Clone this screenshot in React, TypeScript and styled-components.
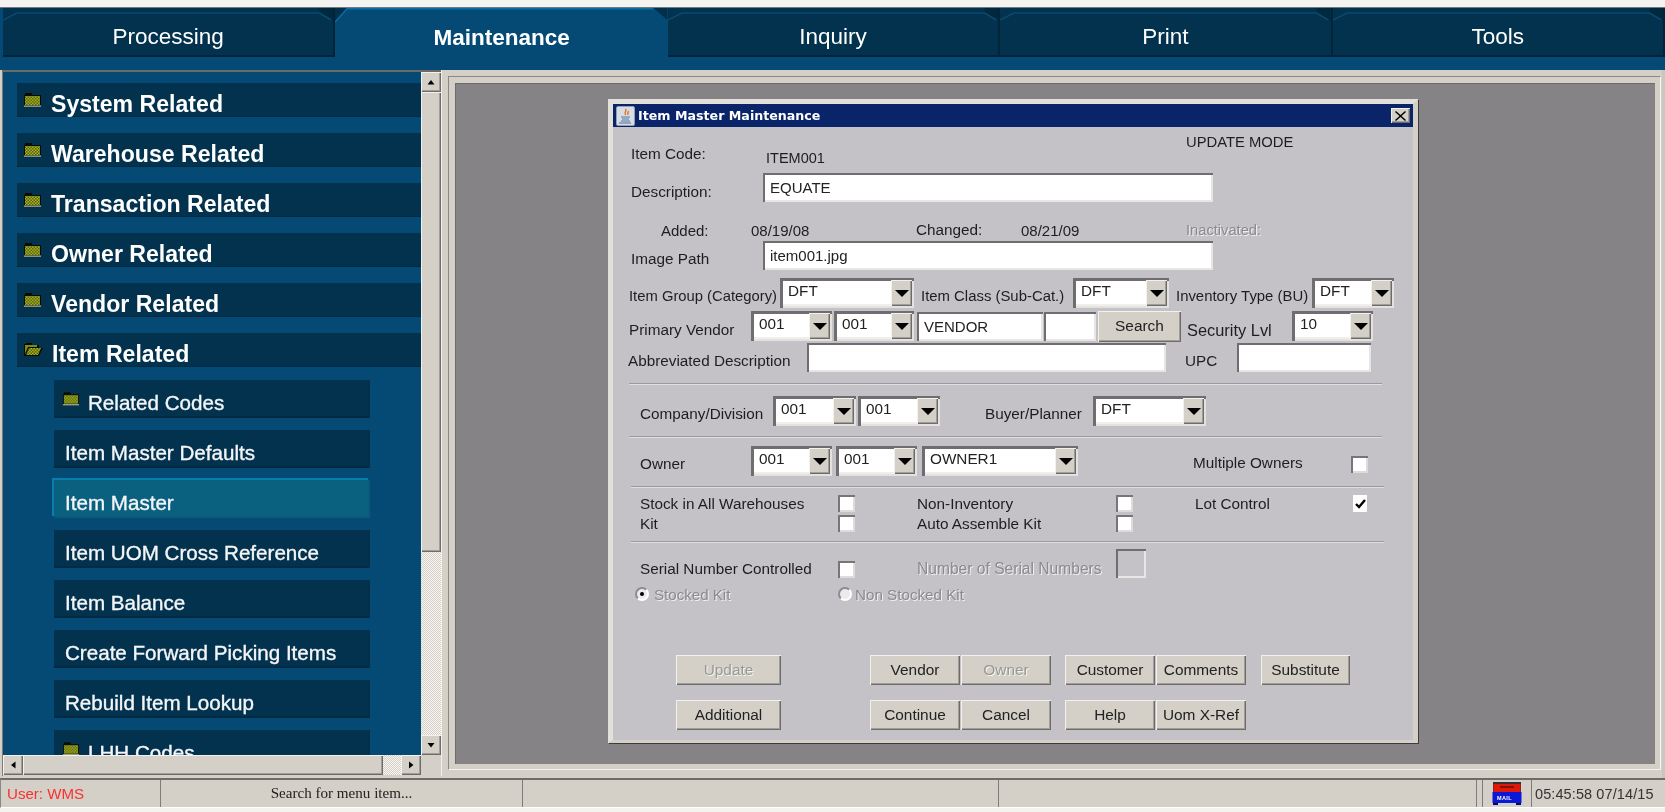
import React from "react";
import styled, { createGlobalStyle, css } from "styled-components";

const Global = createGlobalStyle`
  html, body { margin: 0; padding: 0; width: 1665px; height: 812px; overflow: hidden; background: #fff; }
  #root { width: 1665px; height: 812px; }
  * { box-sizing: border-box; }
`;

const sans = `"Liberation Sans", Arial, sans-serif`;
const dither = css`
  background-color: #e6e4e0;
  background-image: repeating-conic-gradient(#d4d0c8 0 25%, #f6f5f2 0 50%);
  background-size: 2px 2px;
`;
const raised = css`
  background: #d4d0c8;
  box-shadow: inset 1px 1px 0 #f2f1ed, inset -1px -1px 0 #6e6c68, inset -2px -2px 0 #a09e9a;
`;
const sunken = css`
  box-shadow: inset 2px 2px 0 #6f6d70, inset -2px -2px 0 #e8e6e4;
`;

const Page = styled.div`
  width: 1665px; height: 812px; padding-top: 7px;
  display: flex; flex-direction: column;
  font-family: ${sans};
  background: #f4f3ef;
  filter: blur(0.35px);
`;
const TopWhite = styled.div`
  position: absolute; left: 0; top: 0; width: 1665px; height: 7px; background: #fff;
`;
const TabStrip = styled.nav`
  height: 63px; background: #044a75; padding: 0 0 13px 3px; display: flex; border-top: 1px solid #6d7a82;
`;
const Tab = styled.div<{ $active?: boolean }>`
  position: relative; width: 332.4px; height: 49px; display: flex; align-items: center; justify-content: center;
  color: #fff; font-size: 22.5px;
  padding-top: 11px;
  ${(p) => p.$active ? css`
    background: #044a75; font-weight: bold;
  ` : css`
    background: #03324e;
    border-right: 2px solid #02243a; border-bottom: 2px solid #02243a;
  `}
`;
const TabBevel = styled.svg`
  position: absolute; left: 0; top: 0; width: 100%; height: 16px; pointer-events: none;
`;

const Body = styled.div`
  height: 708px; display: flex; background: #d4d0c8; padding-left: 2px; border-right: 3px solid #c8c6c0;
`;
const MenuPane = styled.aside`
  width: 439px; height: 706px; display: grid;
  grid-template-columns: 418px 20px; grid-template-rows: 683px 20px;
  border-top: 2px solid #6b6b68; border-left: 1px solid #7a7a76;
`;
const MenuScroll = styled.div`
  background: #044a75; overflow: hidden; padding: 11px 0 0 14px;
  display: flex; flex-direction: column; gap: 16px;
`;
const GroupRow = styled.div`
  flex: none; height: 34px; width: 404px; background: #03324e; border-bottom: 1px solid #022a42;
  display: flex; align-items: center; padding: 9px 0 0 6px; gap: 9px;
  color: #fff; font-weight: bold; font-size: 23.1px;
`;
const SubRow = styled.div<{ $active?: boolean; $text?: boolean }>`
  flex: none; height: 38px; width: 316px; margin-left: 37px;
  background: ${(p) => (p.$active ? "#09607f" : "#03324e")};
  border-right: 2px solid ${(p) => (p.$active ? "#0a5a7c" : "#02304a")};
  border-bottom: 2px solid ${(p) => (p.$active ? "#0a5a7c" : "#022a42")};
  ${(p) => p.$active && css`box-shadow: -2px -2px 0 #0a7eaa;`}
  display: flex; align-items: center; padding: 10px 0 0 ${(p) => (p.$text ? "11px" : "8px")}; gap: 8px;
  color: #f4f6f8; font-size: 20.6px; -webkit-text-stroke: 0.35px #f4f6f8;
`;
const VBar = styled.div`
  display: flex; flex-direction: column; background: #d4d0c8;
`;
const HBar = styled.div`
  display: flex; background: #d4d0c8;
`;
const ScrollBtn = styled.div`
  ${raised};
  flex: none; width: 20px; height: 20px; display: flex; align-items: center; justify-content: center;
`;
const VThumb = styled.div`
  ${raised}; flex: none; height: 460px;
`;
const HThumb = styled.div`
  ${raised}; flex: none; width: 360px;
`;
const Track = styled.div`
  ${dither}; flex: 1;
`;
const Corner = styled.div`background: #d4d0c8;`;

const Desktop = styled.main`
  width: 1221px; height: 706px;
  padding: 6px 1px 6px 6px; background: #d4d0c8;
  border-left: 1px solid #f1f0ec;
`;
const DesktopInner = styled.div`
  height: 100%; padding: 6px 5px 5px 6px; border: 1px solid #8a8884;
  border-right-color: #f4f3ef; border-bottom-color: #f4f3ef;
  background: #d4d0c8;
`;
const Canvas = styled.div`
  height: 100%; background: #858386; padding: 15px 0 0 152px;
  border-top: 1px solid #6d6b6e; border-left: 1px solid #6d6b6e;
`;
const Dialog = styled.section`
  width: 810px; height: 644px; background: #c4c2c6;
  border: 5px solid #d4d0c8;
  border-bottom-width: 3px;
  border-top-color: #e2e0da; border-left-color: #e2e0da;
  box-shadow: 1px 1px 0 #3c3c3c;
  display: flex; flex-direction: column;
`;
const TitleBar = styled.header`
  flex: none; height: 23px; background: #0a246a; display: flex; align-items: center;
  padding: 0 3px; color: #fff;
`;
const TitleText = styled.span`
  font-family: "DejaVu Sans", Verdana, sans-serif; font-weight: bold; font-size: 12.65px; margin-left: 3px;
`;
const CloseBtn = styled.div`
  ${raised}; margin-left: auto; width: 19px; height: 15px; display: flex; align-items: center; justify-content: center;
`;
const Form = styled.div`
  flex: 1; padding-top: 1px; color: #1e1e1e; font-size: 15.3px;
`;
const Row = styled.div<{ $h: number; $top?: number; $left?: number }>`
  display: flex; align-items: center; height: ${(p) => p.$h}px;
  margin-top: ${(p) => p.$top ?? 0}px; padding-left: ${(p) => p.$left ?? 0}px;
  white-space: nowrap;
`;
const Label = styled.span<{ $w?: number; $dy?: number; $off?: boolean; $size?: number; $ml?: number }>`
  flex: none; ${(p) => p.$w != null && `width: ${p.$w}px;`}
  ${(p) => p.$ml != null && `margin-left: ${p.$ml}px;`}
  ${(p) => p.$dy != null && `transform: translateY(${p.$dy}px);`}
  ${(p) => p.$size && `font-size: ${p.$size}px;`}
  ${(p) => p.$off && css`color: #8c8a8e; text-shadow: 1px 1px 0 #f0eff0;`}
`;
const Input = styled.div<{ $w: number; $ml?: number; $off?: boolean }>`
  flex: none; width: ${(p) => p.$w}px; height: 29px; margin-left: ${(p) => p.$ml ?? 0}px;
  background: ${(p) => (p.$off ? "#c4c2c6" : "#fff")}; ${sunken};
  display: flex; align-items: center; padding: 0 0 0 7px; font-size: 15px; color: #222;
`;
const ComboBox = styled.div<{ $w: number; $ml?: number }>`
  flex: none; width: ${(p) => p.$w}px; height: 30px; margin-left: ${(p) => p.$ml ?? 0}px;
  background: #fff; box-shadow: inset 3px 3px 0 #6f6d70, inset -2px -2px 0 #e4e2e0;
  display: flex; padding: 3px 2px 2px 3px; font-size: 15.3px; color: #222;
`;
const ComboText = styled.span`
  flex: 1; padding: 0 0 5px 5px; display: flex; align-items: center; background: #fff;
  box-shadow: inset 0 -2px 0 #f0efec;
`;
const ComboArrow = styled.span`
  flex: none; width: 21px; ${raised}; display: flex; align-items: center; justify-content: center;
  margin-top: -1px;
`;
const Arrow = styled.i`
  display: block; width: 0; height: 0; border-left: 7px solid transparent; border-right: 7px solid transparent;
  border-top: 7px solid #000;
`;
const Separator = styled.hr<{ $top: number; $left?: number; $w?: number }>`
  margin: ${(p) => p.$top}px 0 0 ${(p) => p.$left ?? 16}px; width: ${(p) => p.$w ?? 753}px; height: 2px; border: 0;
  background: linear-gradient(#9b999d 50%, #e0dfe0 50%);
  flex: none;
`;
const Check = styled.span<{ $ml?: number; $dy?: number; $flat?: boolean }>`
  flex: none; width: ${(p) => (p.$flat ? 14 : 17)}px; height: 17px; margin-left: ${(p) => p.$ml ?? 0}px; background: #fff;
  ${(p) => p.$dy != null && `transform: translateY(${p.$dy}px);`}
  ${(p) => !p.$flat && "box-shadow: inset 2px 2px 0 #777578, inset -2px -2px 0 #dddbdc;"}
  display: flex; align-items: center; justify-content: center;
`;
const Radio = styled.span<{ $on?: boolean }>`
  flex: none; width: 14px; height: 14px; border-radius: 50%;
  background: #eceaea; border: 2px solid #8d8b8f; border-right-color: #fff; border-bottom-color: #fff;
  display: flex; align-items: center; justify-content: center;
  &::after { content: ""; width: 4px; height: 4px; border-radius: 50%; background: ${(p) => (p.$on ? "#000" : "transparent")}; }
`;
const Button = styled.div<{ $w: number; $ml?: number; $off?: boolean; $h?: number }>`
  ${raised};
  flex: none; width: ${(p) => p.$w}px; height: ${(p) => p.$h ?? 30}px; margin-left: ${(p) => p.$ml ?? 0}px;
  display: flex; align-items: center; justify-content: center; font-size: 15.4px; color: #222;
  ${(p) => p.$off && css`color: #9a9894; text-shadow: 1px 1px 0 #f4f3f0;`}
`;

const Status = styled.footer`
  height: 30px; padding-left: 3px; display: flex; background: #d4d0c8;
  border-top: 2px solid #6e6c68; border-left: 1px solid #8a8884;
  border-bottom: 1px solid #ffffff; font-size: 15.1px;
`;
const Cell = styled.div<{ $w: number; $pad?: number; $center?: boolean; $red?: boolean; $serif?: boolean }>`
  flex: none; width: ${(p) => p.$w}px; display: flex; align-items: center;
  border-right: 1px solid #7e7c78; padding-left: ${(p) => p.$pad ?? 0}px;
  ${(p) => p.$center && "justify-content: center;"}
  color: ${(p) => (p.$red ? "#fa3030" : "#222")};
  ${(p) => p.$serif && `font-family: "Liberation Serif", serif;`}
`;
const StatusEnd = styled.div`
  flex: 1; display: flex; align-items: center; padding-left: 3px; letter-spacing: 0.1px; color: #333; font-size: 14.5px;
`;
const IconSvg = styled.svg`
  flex: none; margin-top: -9px;
`;
const MailSvg = styled.svg`
  flex: none;
`;
const MailWord = styled.text`
  font-family: ${sans}; font-weight: bold; font-size: 5.5px; fill: #fff; letter-spacing: 0.4px;
`;

const FolderBody = () => (
  <defs>
    <pattern id="dots" width="3" height="3" patternUnits="userSpaceOnUse">
      <rect width="3" height="3" fill="#a4b222" />
      <rect x="0" y="0" width="1.5" height="1.5" fill="#56620c" />
      <rect x="1.5" y="1.5" width="1.5" height="1.5" fill="#56620c" />
    </pattern>
  </defs>
);
const Folder = ({ w = 19 }: { w?: number }) => (
  <IconSvg width={w} height="15" viewBox="0 0 19 15">
    <FolderBody />
    <path d="M1 3h1V1h7v2h9v11H1z" fill="#0c0c04" />
    <rect x="2" y="4" width="15" height="9" fill="url(#dots)" />
    <rect x="1" y="13.5" width="17" height="1.2" fill="#bcbc98" />
  </IconSvg>
);
const OpenFolder = () => (
  <IconSvg width="20" height="15" viewBox="0 0 20 15">
    <FolderBody />
    <path d="M1 14V2h2V1h6v2h7v3h4l-4 8z" fill="#0c0c04" />
    <path d="M2 12V3h12v2H5z" fill="#7c8a14" />
    <path d="M3 13l3-7h12l-3 7z" fill="url(#dots)" />
  </IconSvg>
);
const Glyph = ({ d, w = 8, h = 8 }: { d: string; w?: number; h?: number }) => (
  <svg width={w} height={h} viewBox="0 0 8 8"><path d={d} fill="#000" /></svg>
);
const JavaIcon = () => (
  <svg width="19" height="20" viewBox="0 0 19 20" style={{ flex: "none" }}>
    <rect x="0.5" y="0.5" width="18" height="19" rx="1.5" fill="#d8dde4" stroke="#8fa0b8" />
    <path d="M9.5 3c2 2-2 3 0 6M12 5c1 1-1 2 0 4" stroke="#e0701c" strokeWidth="1.4" fill="none" />
    <path d="M5 11h9M6 13h7M5 15h9" stroke="#4a78a8" strokeWidth="1.2" />
    <path d="M3 17h12" stroke="#6a7c94" strokeWidth="1.2" />
  </svg>
);
const MailIcon = () => (
  <MailSvg width="30" height="23" viewBox="0 0 30 23">
    <rect x="1" y="0" width="28" height="10" fill="#333" />
    <rect x="1.5" y="2" width="27" height="8" fill="#e01808" />
    <rect x="8" y="4" width="14" height="2" fill="#801008" />
    <rect x="0.5" y="10" width="29" height="11" fill="#0c18d8" />
    <rect x="1" y="21" width="5" height="2" fill="#0a0a50" />
    <rect x="24" y="21" width="5" height="2" fill="#0a0a50" />
    <MailWord x="5" y="17.5">MAIL</MailWord>
  </MailSvg>
);

const Combo = ({ w, ml, v }: { w: number; ml?: number; v: string }) => (
  <ComboBox $w={w} $ml={ml}>
    <ComboText>{v}</ComboText>
    <ComboArrow><Arrow /></ComboArrow>
  </ComboBox>
);

const groups = ["System Related", "Warehouse Related", "Transaction Related", "Owner Related", "Vendor Related"];
const subs = ["Item Master Defaults", "Item Master", "Item UOM Cross Reference", "Item Balance", "Create Forward Picking Items", "Rebuild Item Lookup"];
const tabs = ["Processing", "Maintenance", "Inquiry", "Print", "Tools"];

const SubList = styled.div`
  display: contents;
  & > * { margin-top: -4px; }
  & > *:first-child { margin-top: -3px; }
`;

export default function App() {
  return (
    <>
      <Global />
      <TopWhite />
      <Page>
        <TabStrip>
          {tabs.map((t) => (
            <Tab key={t} $active={t === "Maintenance"}>
              {t === "Maintenance" ? (
                <TabBevel viewBox="0 0 332 16" preserveAspectRatio="none">
                  <path d="M0 0H12L0 14z" fill="#02304a" />
                  <path d="M318 0H332V12z" fill="#02304a" />
                  <path d="M0 14L12 0.7H318" stroke="#0a6ea8" strokeWidth="1.4" fill="none" />
                </TabBevel>
              ) : (
                <TabBevel viewBox="0 0 332 16" preserveAspectRatio="none">
                  <path d="M318 5L332 13V0H318z" fill="#02283e" />
                  <path d="M0 12L14 5H318L330 12" stroke="#0a4a70" strokeWidth="1.5" fill="none" />
                </TabBevel>
              )}
              {t}
            </Tab>
          ))}
        </TabStrip>
        <Body>
          <MenuPane>
            <MenuScroll>
              {groups.map((g) => (
                <GroupRow key={g}><Folder />{g}</GroupRow>
              ))}
              <GroupRow><OpenFolder />Item Related</GroupRow>
              <SubList>
                <SubRow><Folder w={18} />Related Codes</SubRow>
                {subs.map((s) => (
                  <SubRow key={s} $text $active={s === "Item Master"}>{s}</SubRow>
                ))}
                <SubRow><Folder w={18} />LHH Codes</SubRow>
              </SubList>
            </MenuScroll>
            <VBar>
              <ScrollBtn><Glyph d="M4 2L7.5 6.5H.5z" /></ScrollBtn>
              <VThumb />
              <Track />
              <ScrollBtn><Glyph d="M4 6.5L.5 2h7z" /></ScrollBtn>
            </VBar>
            <HBar>
              <ScrollBtn><Glyph d="M2 4L6.5.5v7z" /></ScrollBtn>
              <HThumb />
              <Track />
              <ScrollBtn><Glyph d="M6.5 4L2 .5v7z" /></ScrollBtn>
            </HBar>
            <Corner />
          </MenuPane>
          <Desktop>
            <DesktopInner>
              <Canvas>
                <Dialog>
                  <TitleBar>
                    <JavaIcon />
                    <TitleText>Item Master Maintenance</TitleText>
                    <CloseBtn><svg width="11" height="10" viewBox="0 0 11 10"><path d="M1 0l4.5 4L10 0l1 1-4.5 4L11 9l-1 1-4.5-4L1 10 0 9l4.5-4L0 1z" fill="#000" /></svg></CloseBtn>
                  </TitleBar>
                  <Form>
                    <Row $h={20} $top={4} $left={18}>
                      <Label $w={135} $dy={12}>Item Code:</Label>
                      <Label $w={420} $dy={16} $size={14.5}>ITEM001</Label>
                      <Label $size={14.8}>UPDATE MODE</Label>
                    </Row>
                    <Row $h={29} $top={21} $left={18}>
                      <Label $w={132} $dy={4}>Description:</Label>
                      <Input $w={450}>EQUATE</Input>
                    </Row>
                    <Row $h={20} $top={18} $left={48}>
                      <Label $w={90} $size={15}>Added:</Label>
                      <Label $w={165} $size={15}>08/19/08</Label>
                      <Label $w={105}>Changed:</Label>
                      <Label $w={165} $size={15}>08/21/09</Label>
                      <Label $off $size={14.7}>Inactivated:</Label>
                    </Row>
                    <Row $h={29} $top={1} $left={18}>
                      <Label $w={132} $dy={3}>Image Path</Label>
                      <Input $w={450}>item001.jpg</Input>
                    </Row>
                    <Row $h={30} $top={8} $left={16}>
                      <Label $w={151} $dy={3} $size={14.8}>Item Group (Category)</Label>
                      <Combo w={134} v="DFT" />
                      <Label $w={152} $ml={7} $dy={3} $size={14.9}>Item Class (Sub-Cat.)</Label>
                      <Combo w={96} v="DFT" />
                      <Label $w={136} $ml={7} $dy={3} $size={14.9}>Inventory Type (BU)</Label>
                      <Combo w={82} v="DFT" />
                    </Row>
                    <Row $h={30} $top={3} $left={16}>
                      <Label $w={122} $dy={4}>Primary Vendor</Label>
                      <Combo w={81} v="001" />
                      <Combo w={80} ml={2} v="001" />
                      <Input $w={126} $ml={3}>VENDOR</Input>
                      <Input $w={52} $ml={1} />
                      <Button $w={83} $ml={2} $h={31}>Search</Button>
                      <Label $w={105} $ml={6} $dy={4} $size={16.4}>Security Lvl</Label>
                      <Combo w={81} v="10" />
                    </Row>
                    <Row $h={29} $top={2} $left={15}>
                      <Label $w={179} $dy={3}>Abbreviated Description</Label>
                      <Input $w={359} />
                      <Label $w={52} $ml={19} $dy={3}>UPC</Label>
                      <Input $w={134} />
                    </Row>
                    <Separator $top={11} />
                    <Row $h={30} $top={11} $left={27}>
                      <Label $w={133} $dy={3}>Company/Division</Label>
                      <Combo w={83} v="001" />
                      <Combo w={82} ml={2} v="001" />
                      <Label $w={108} $ml={45} $dy={3}>Buyer/Planner</Label>
                      <Combo w={113} v="DFT" />
                    </Row>
                    <Separator $top={10} />
                    <Row $h={30} $top={8} $left={27}>
                      <Label $w={111} $dy={3}>Owner</Label>
                      <Combo w={81} v="001" />
                      <Combo w={81} ml={4} v="001" />
                      <Combo w={156} ml={5} v="OWNER1" />
                      <Label $w={158} $ml={115} $dy={2}>Multiple Owners</Label>
                      <Check $dy={3} />
                    </Row>
                    <Separator $top={10} $left={18} />
                    <Row $h={17} $top={7} $left={27}>
                      <Label $w={198}>Stock in All Warehouses</Label>
                      <Check />
                      <Label $w={199} $ml={62}>Non-Inventory</Label>
                      <Check />
                      <Label $w={158} $ml={62}>Lot Control</Label>
                      <Check $flat>
                        <svg width="11" height="10" viewBox="0 0 11 10"><path d="M1 5l3 3 6-7" stroke="#000" strokeWidth="2.4" fill="none" /></svg>
                      </Check>
                    </Row>
                    <Row $h={17} $top={3} $left={27}>
                      <Label $w={198}>Kit</Label>
                      <Check />
                      <Label $w={199} $ml={62}>Auto Assemble Kit</Label>
                      <Check />
                    </Row>
                    <Separator $top={9} $left={18} />
                    <Row $h={30} $top={5} $left={27}>
                      <Label $w={198} $dy={6}>Serial Number Controlled</Label>
                      <Check $dy={6} />
                      <Label $off $w={199} $ml={62} $dy={6} $size={15.6}>Number of Serial Numbers</Label>
                      <Input $w={30} $off />
                    </Row>
                    <Row $h={16} $top={8} $left={22}>
                      <Radio $on />
                      <Label $off $w={184} $ml={5} $size={15.1}>Stocked Kit</Label>
                      <Radio />
                      <Label $off $ml={3} $size={15.2}>Non Stocked Kit</Label>
                    </Row>
                    <Row $h={30} $top={53} $left={63}>
                      <Button $w={105} $off>Update</Button>
                      <Button $w={90} $ml={89}>Vendor</Button>
                      <Button $w={90} $ml={1} $off>Owner</Button>
                      <Button $w={90} $ml={14}>Customer</Button>
                      <Button $w={90} $ml={1}>Comments</Button>
                      <Button $w={89} $ml={15}>Substitute</Button>
                    </Row>
                    <Row $h={30} $top={15} $left={63}>
                      <Button $w={105}>Additional</Button>
                      <Button $w={90} $ml={89}>Continue</Button>
                      <Button $w={90} $ml={1}>Cancel</Button>
                      <Button $w={90} $ml={14}>Help</Button>
                      <Button $w={90} $ml={1}>Uom X-Ref</Button>
                    </Row>
                  </Form>
                </Dialog>
              </Canvas>
            </DesktopInner>
          </Desktop>
        </Body>
        <Status>
          <Cell $w={157} $pad={3} $red>User: WMS</Cell>
          <Cell $w={362} $center $serif>Search for menu item...</Cell>
          <Cell $w={476} />
          <Cell $w={478} />
          <Cell $w={6} />
          <Cell $w={49} $pad={9}><MailIcon /></Cell>
          <StatusEnd>05:45:58 07/14/15</StatusEnd>
        </Status>
      </Page>
    </>
  );
}
